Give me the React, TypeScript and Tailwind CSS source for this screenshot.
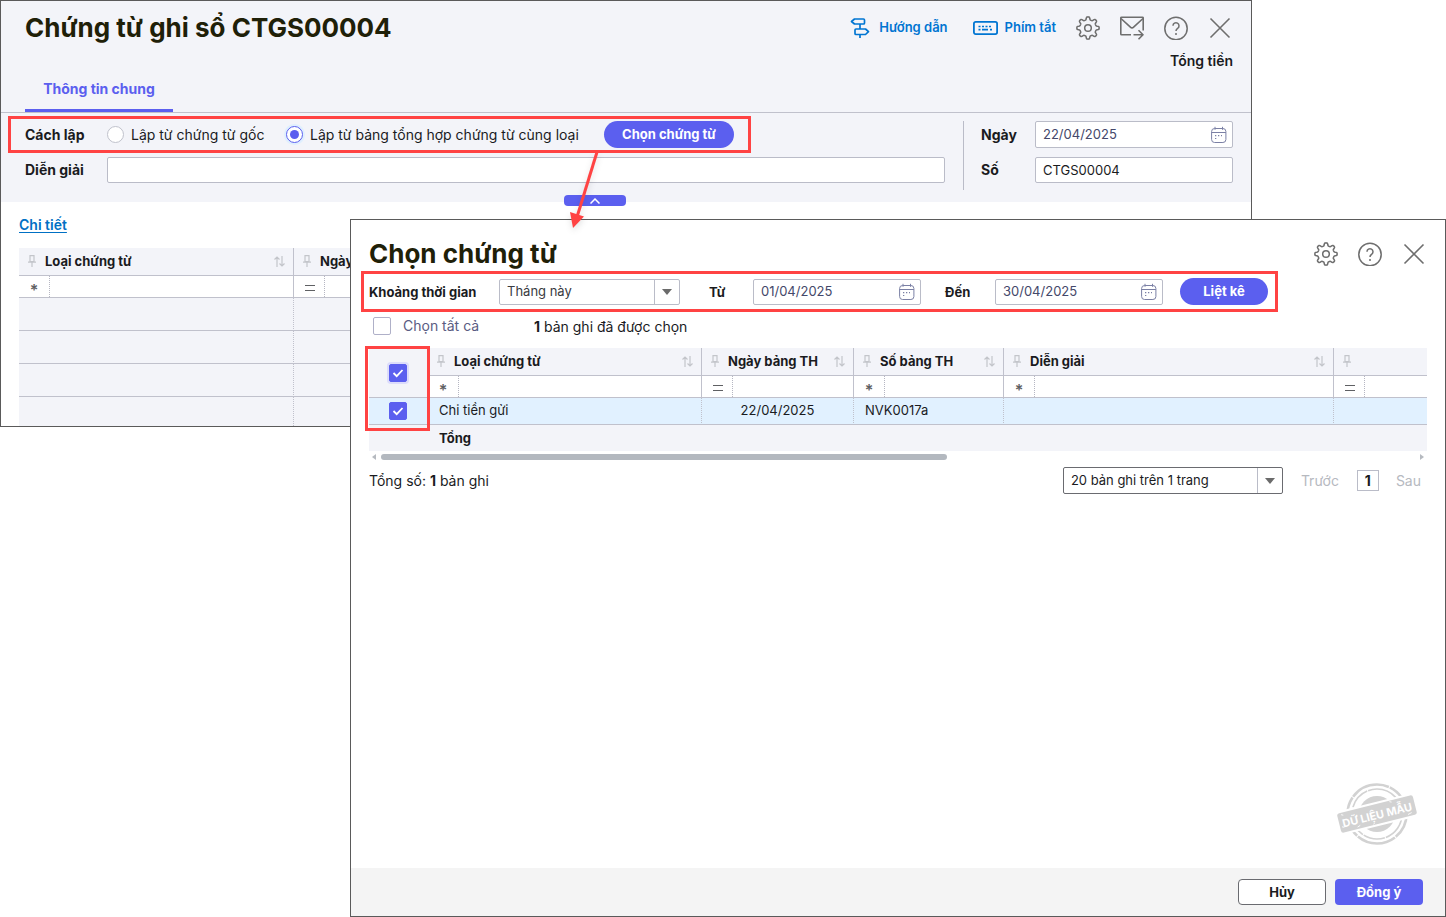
import type { InputHTMLAttributes, ReactNode } from 'react'

type FilterKind = 'text' | 'equal'

interface Column {
  title: string
  width: string
  filter: FilterKind
}

const voucherColumns: Column[] = [
  { title: 'Loại chứng từ', width: 'w-[275px]', filter: 'text' },
  { title: 'Ngày', width: '', filter: 'equal' },
]

const pickerColumns: Column[] = [
  { title: 'Loại chứng từ', width: 'w-[274px]', filter: 'text' },
  { title: 'Ngày bảng TH', width: 'w-[152px]', filter: 'equal' },
  { title: 'Số bảng TH', width: 'w-[150px]', filter: 'text' },
  { title: 'Diễn giải', width: 'w-[330px]', filter: 'text' },
  { title: '', width: '', filter: 'equal' },
]

// outline of an eight-tooth cog, sampled around the circle
const gearPoints = Array.from({ length: 160 }, (_, i) => {
  const angle = (i / 160) * Math.PI * 2
  const radius = 9.7 + 1.5 * Math.tanh(2.2 * Math.cos(8 * angle) - 0.2)
  return `${(12 + radius * Math.cos(angle)).toFixed(2)},${(12 + radius * Math.sin(angle)).toFixed(2)}`
}).join(' ')

function GearIcon() {
  return (
    <svg width="24" height="24" viewBox="0 0 24 24" fill="none" stroke="currentColor" strokeWidth="1.500" strokeLinejoin="round">
      <polygon points={gearPoints} />
      <circle cx="12" cy="12" r="3.300" />
    </svg>
  )
}

function SignpostIcon() {
  return (
    <svg width="20" height="22" viewBox="0 0 20 22" fill="none" stroke="currentColor" strokeWidth="1.700" strokeLinejoin="round">
      <path d="M4.500 2h9a1 1 0 0 1 1 1v3a1 1 0 0 1-1 1h-9L1.500 4.500z" />
      <path d="M6 12h9.500l3 2.700-3 2.800H6a1 1 0 0 1-1-1V13a1 1 0 0 1 1-1z" />
      <path d="M10 7v5M10 17.500v3.500" />
    </svg>
  )
}

function KeyboardIcon() {
  return (
    <svg width="25" height="14" viewBox="0 0 25 14" fill="none" stroke="currentColor">
      <rect x="0.900" y="0.900" width="23.200" height="12.200" rx="1.800" strokeWidth="1.800" />
      <path d="M5.500 5.500h14" strokeWidth="1.700" strokeDasharray="2 1.500" />
      <path d="M5.500 8.700h2M9 8.700h6M17 8.700h2" strokeWidth="1.700" />
    </svg>
  )
}

function MailIcon() {
  return (
    <svg width="24" height="24" viewBox="0 0 24 24" fill="none" stroke="currentColor" strokeWidth="1.600" strokeLinejoin="round">
      <path d="M11 18.700H1.600a.8.8 0 0 1-.8-.8V2a.8.8 0 0 1 .8-.8h20.800a.8.8 0 0 1 .8.8v12.500" />
      <path d="M1 2.500l9.400 8.600a2.300 2.300 0 0 0 3.200 0L23 2.500M13.500 18.700h9.500M18.500 14.200l4.500 4.500-4.500 4.500" />
    </svg>
  )
}

function HelpIcon() {
  return (
    <svg width="24" height="24" viewBox="0 0 24 24" fill="none" stroke="currentColor" strokeWidth="1.500">
      <circle cx="12" cy="12.500" r="11.200" />
      <path d="M9 9.800a3 3 0 1 1 4.600 2.500c-1 .7-1.600 1.200-1.600 2.600" />
      <circle cx="12" cy="18" r="1" fill="currentColor" stroke="none" />
    </svg>
  )
}

function CloseIcon() {
  return (
    <svg width="24" height="24" viewBox="0 0 24 24" fill="none" stroke="currentColor" strokeWidth="1.600">
      <path d="M2.500 2.500l19 19M21.500 2.500l-19 19" />
    </svg>
  )
}

function CalendarIcon() {
  return (
    <svg width="16" height="18" viewBox="0 0 16 18" fill="none" stroke="currentColor">
      <rect x="0.600" y="2.500" width="14.300" height="14" rx="3" />
      <path d="M.6 6.500h14.300M4 .8v3M11.500 .8v3" />
      <path d="M4 9.700h1.300M7 9.700h1.300M10 9.700h1M4 12.500h1.300" strokeWidth="1.200" />
    </svg>
  )
}

function PinIcon() {
  return (
    <svg width="8" height="12" viewBox="0 0 8 12" fill="none" stroke="currentColor" strokeWidth="1.200" className="shrink-0 text-[#c3c5ca]">
      <path d="M2 .6h4v6H2zM0 7.200h8M4 7.200V12" />
    </svg>
  )
}

function SortIcon() {
  return (
    <svg width="11" height="11" viewBox="0 0 11 11" fill="none" stroke="currentColor" strokeWidth="1.200" className="shrink-0 text-[#c3c5ca]">
      <path d="M3 11V1M.5 3.500L3 1l2.500 2.500M8 0v10M5.500 7.500L8 10l2.500-2.500" />
    </svg>
  )
}

function SampleStamp() {
  return (
    <svg width="80" height="64" viewBox="0 0 80 64" role="img" aria-label="Dữ liệu mẫu">
      <g fill="none" stroke="#d2d2d2">
        <circle cx="40" cy="32" r="29.500" strokeWidth="2.600" strokeDasharray="26 1 40 1 15 1" />
        <circle cx="40" cy="32" r="25" strokeWidth="1.600" strokeDasharray="30 1 22 1" />
      </g>
      <circle cx="40" cy="32" r="18" fill="#d2d2d2" />
      <g transform="rotate(-14 40 32)">
        <rect x="-1" y="20" width="82" height="24" fill="#fff" />
        <rect x="1" y="22" width="78" height="20" rx="2.500" fill="#d2d2d2" />
        <path d="M5 24l2 1M18 40l3-1M55 23l2 1M70 40l4-1M34 41l2-1M3 36l2 1" stroke="#fff" strokeWidth="0.800" />
        <text x="40" y="37" textAnchor="middle" fill="#fff" fontSize="11" fontWeight="700">
          DỮ LIỆU MẪU
        </text>
      </g>
    </svg>
  )
}

function IconButton({ label, children }: { label: string; children: ReactNode }) {
  return (
    <button type="button" aria-label={label} className="flex size-6 items-center justify-center text-[#6e6e6e]">
      {children}
    </button>
  )
}

function DateInput({ id, value, className }: { id: string; value: string; className: string }) {
  return (
    <div className={`relative ${className}`}>
      <input
        id={id}
        defaultValue={value}
        className="h-full w-full rounded-xs border border-[#babcc8] bg-white px-[7px] pb-0.5 text-[13px] text-[#44486a]"
      />
      <span className="pointer-events-none absolute inset-y-0 right-1.5 flex items-center text-[#7b80a5]">
        <CalendarIcon />
      </span>
    </div>
  )
}

function Select({ id, label, value, className }: { id: string; label?: string; value: string; className: string }) {
  return (
    <div className={`relative ${className}`}>
      <select
        id={id}
        aria-label={label}
        defaultValue={value}
        className="h-full w-full appearance-none rounded-xs border border-inherit bg-white px-[7px] text-[13px]"
      >
        <option>{value}</option>
      </select>
      <span className="pointer-events-none absolute inset-y-px right-px flex w-[25px] items-center justify-center border-l border-[#babcc8]">
        <span className="border-x-[5px] border-t-[6px] border-x-transparent border-t-[#6b6b6b]" />
      </span>
    </div>
  )
}

function Checkbox({ className = '', ...props }: InputHTMLAttributes<HTMLInputElement>) {
  return (
    <span className={`relative inline-flex size-[18px] rounded-xs ${className}`}>
      <input
        type="checkbox"
        className="peer size-full appearance-none rounded-xs border border-[#afb0c8] bg-white checked:border-[#5b5fef] checked:bg-[#5b5fef]"
        {...props}
      />
      <svg
        viewBox="0 0 18 18"
        fill="none"
        stroke="#fff"
        strokeWidth="1.800"
        className="pointer-events-none absolute inset-0 hidden peer-checked:block"
      >
        <path d="M4.500 9l3.200 3.200L13.500 6" />
      </svg>
    </span>
  )
}

function Radio(props: InputHTMLAttributes<HTMLInputElement>) {
  return (
    <input
      type="radio"
      name="method"
      className="grid size-[17px] shrink-0 appearance-none place-content-center rounded-full border border-[#c0c2cc] bg-white before:size-[9px] before:rounded-full checked:border-[#5b5fef] checked:ring-2 checked:ring-[#dfeffe] checked:before:bg-[#5b5fef]"
      {...props}
    />
  )
}

function HeaderCell({ column, last }: { column: Column; last: boolean }) {
  return (
    <th scope="col" className={`h-7 border-b border-[#c0c1cc] p-0 align-top ${column.width} ${last ? '' : 'border-r'}`}>
      <div className="flex h-[26px] items-center pr-2 pl-[9px] text-[13px] leading-5 font-bold">
        <PinIcon />
        <span className="ml-[9px] flex-1 truncate text-left">{column.title}</span>
        {column.title && <SortIcon />}
      </div>
    </th>
  )
}

function FilterCell({ column, last }: { column: Column; last: boolean }) {
  return (
    <td className={`h-[22px] border-b border-[#c0c1cc] bg-white p-0 ${last ? '' : 'border-r'}`}>
      <div className="flex h-[21px]">
        <button
          type="button"
          aria-label={`Điều kiện lọc ${column.title}`}
          className="flex w-[31px] shrink-0 items-center justify-center border-r border-dotted border-[#b5b6c2] text-[#5f6063]"
        >
          {column.filter === 'equal' ? (
            <svg width="10" height="6" viewBox="0 0 10 6" stroke="currentColor" className="mt-0.5 ml-0.5">
              <path d="M0 .5h10M0 5.500h10" />
            </svg>
          ) : (
            <span className="pt-1.5 text-base leading-4 font-semibold">*</span>
          )}
        </button>
        <input aria-label={`Lọc ${column.title}`} className="min-w-0 flex-1 px-2 text-[13px]" />
      </div>
    </td>
  )
}

function VoucherTable() {
  return (
    <table className="w-full table-fixed border-separate border-spacing-0 bg-[#f3f4f9]">
      <thead>
        <tr>
          {voucherColumns.map((column, i) => (
            <HeaderCell key={column.title} column={column} last={i === voucherColumns.length - 1} />
          ))}
        </tr>
        <tr>
          {voucherColumns.map((column, i) => (
            <FilterCell key={column.title} column={column} last={i === voucherColumns.length - 1} />
          ))}
        </tr>
      </thead>
      <tbody>
        {[0, 1, 2].map((row) => (
          <tr key={row}>
            {voucherColumns.map((column) => (
              <td key={column.title} className="h-[33px] border-r border-b border-[#c0c1cc] [border-right-style:dotted]" />
            ))}
          </tr>
        ))}
        <tr>
          {voucherColumns.map((column) => (
            <td key={column.title} className="h-[29px] border-r border-dotted border-[#c0c1cc]" />
          ))}
        </tr>
      </tbody>
    </table>
  )
}

function PickerTable() {
  const cell = 'h-[27px] border-b border-[#c0c1cc] bg-[#e1f1ff] pt-0 pb-0.5 leading-5 [border-right-style:dotted]'

  return (
    <div className="relative">
      <table className="w-full table-fixed border-separate border-spacing-0 bg-[#f3f4f9] text-[13px]">
        <thead>
          <tr>
            <th rowSpan={2} scope="col" className="w-[59px] border-r border-b border-[#c0c1cc] p-0">
              <div className="flex justify-center">
                <Checkbox aria-label="Chọn tất cả chứng từ" defaultChecked className="ring-2 ring-[#dcdcfb]" />
              </div>
            </th>
            {pickerColumns.map((column, i) => (
              <HeaderCell key={i} column={column} last={i === pickerColumns.length - 1} />
            ))}
          </tr>
          <tr>
            {pickerColumns.map((column, i) => (
              <FilterCell key={i} column={column} last={i === pickerColumns.length - 1} />
            ))}
          </tr>
        </thead>
        <tbody>
          <tr>
            <td className="border-r border-b border-[#c0c1cc] bg-[#e1f1ff] p-0 [border-right-style:dotted]">
              <div className="flex justify-center">
                <Checkbox aria-label="Chọn Chi tiền gửi" defaultChecked />
              </div>
            </td>
            <td className={`${cell} border-r px-[11px]`}>Chi tiền gửi</td>
            <td className={`${cell} border-r px-[11px] text-center`}>22/04/2025</td>
            <td className={`${cell} border-r px-[11px]`}>NVK0017a</td>
            <td className={`${cell} border-r`} />
            <td className={cell} />
          </tr>
        </tbody>
        <tfoot>
          <tr>
            <td className="h-[26px] p-0" />
            <td className="px-[11px] py-0 font-bold">Tổng</td>
            <td colSpan={4} />
          </tr>
        </tfoot>
      </table>
      <div className="pointer-events-none absolute -top-0.5 -left-1 h-[85px] w-[65px] border-3 border-[#ff4343]" />
    </div>
  )
}

function VoucherWindow() {
  return (
    <section className="mr-[194px] border border-[#5a5a5a] bg-white">
      <header className="border-b border-[#c0c1cc] bg-[#f3f4f9] pr-[18px] pl-6">
        <div className="flex h-[50px] items-center justify-between pt-1 pr-px">
          <h1 className="text-[26px] leading-8 font-bold text-[#1f2008]">Chứng từ ghi sổ CTGS00004</h1>
          <div className="flex items-center gap-5">
            <a href="#huong-dan" className="flex items-center gap-[9px] text-[13px] font-semibold text-[#0075d2]">
              <SignpostIcon />
              Hướng dẫn
            </a>
            <a href="#phim-tat" className="ml-[5px] flex items-center gap-[7px] text-[13px] font-semibold text-[#0075d2]">
              <KeyboardIcon />
              Phím tắt
            </a>
            <IconButton label="Thiết lập">
              <GearIcon />
            </IconButton>
            <IconButton label="Gửi email">
              <MailIcon />
            </IconButton>
            <IconButton label="Trợ giúp">
              <HelpIcon />
            </IconButton>
            <IconButton label="Đóng">
              <CloseIcon />
            </IconButton>
          </div>
        </div>
        <div className="flex h-[61px] justify-between">
          <button
            type="button"
            className="h-[43px] w-[148px] self-end border-b-3 border-[#5b5fef] text-sm font-bold text-[#5b5fef]"
          >
            Thông tin chung
          </button>
          <p className="text-sm leading-5 font-semibold">Tổng tiền</p>
        </div>
      </header>

      <form className="relative flex bg-[#f3f4f9] pt-[3px] pr-[18px] pb-[19px] pl-[7px] text-sm">
        <div className="flex-1">
          <div
            role="radiogroup"
            aria-labelledby="method-label"
            className="flex h-[37px] w-fit items-center border-3 border-[#ff4343] px-3.5"
          >
            <span id="method-label" className="w-[82px] font-bold">
              Cách lập
            </span>
            <label className="flex w-[179px] items-center gap-[7px]">
              <Radio />
              Lập từ chứng từ gốc
            </label>
            <label className="flex w-[318px] items-center gap-[7px]">
              <Radio defaultChecked />
              Lập từ bảng tổng hợp chứng từ cùng loại
            </label>
            <button type="button" className="h-[27px] w-[130px] rounded-full bg-[#5b5fef] text-[13px] font-bold text-white">
              Chọn chứng từ
            </button>
          </div>
          <div className="mt-1 flex items-center pr-[18px] pl-[17px]">
            <label htmlFor="description" className="w-[82px] font-bold">
              Diễn giải
            </label>
            <input id="description" className="h-[26px] min-w-0 flex-1 rounded-xs border border-[#babcc8] bg-white px-[7px] text-[13px]" />
          </div>
        </div>
        <div className="mt-[5px] -mb-[7px] grid grid-cols-[54px_198px] content-start gap-y-[9px] border-l border-[#babcc8] pl-[17px]">
          <label htmlFor="voucher-date" className="self-center font-bold">
            Ngày
          </label>
          <DateInput id="voucher-date" value="22/04/2025" className="h-[27px]" />
          <label htmlFor="voucher-no" className="self-center font-bold">
            Số
          </label>
          <input
            id="voucher-no"
            defaultValue="CTGS00004"
            className="h-[26px] rounded-xs border border-[#babcc8] bg-white px-[7px] text-[13px]"
          />
        </div>
        <button
          type="button"
          aria-label="Thu gọn"
          className="absolute -bottom-1 left-[563px] flex h-[11px] w-[62px] items-center justify-center rounded-sm bg-[#5b5fef] text-white"
        >
          <svg width="10" height="6" viewBox="0 0 10 6" fill="none" stroke="currentColor" strokeWidth="1.500">
            <path d="M.5 5.500L5 1l4.500 4.500" />
          </svg>
        </button>
      </form>

      <div className="px-[18px] pt-[13px]">
        <a href="#chi-tiet" className="mb-[13px] block w-fit text-sm leading-5 font-semibold text-[#0070c4] underline underline-offset-2">
          Chi tiết
        </a>
        <VoucherTable />
      </div>
    </section>
  )
}

function PickerDialog() {
  return (
    <section
      role="dialog"
      aria-labelledby="picker-title"
      className="absolute top-[219px] right-0 bottom-0 left-[350px] flex flex-col border border-[#5a5a5a] bg-white text-sm"
    >
      <div className="flex-1 px-[18px]">
        <div className="flex h-[51px] items-center justify-between pt-[17px] pr-px">
          <h2 id="picker-title" className="text-[26px] leading-8 font-bold text-[#1f2008]">
            Chọn chứng từ
          </h2>
          <div className="flex items-center gap-5">
            <IconButton label="Thiết lập">
              <GearIcon />
            </IconButton>
            <IconButton label="Trợ giúp">
              <HelpIcon />
            </IconButton>
            <IconButton label="Đóng">
              <CloseIcon />
            </IconButton>
          </div>
        </div>

        <div className="-ml-2 flex h-[41px] w-fit items-center border-3 border-[#ff4343] pr-[7px] pl-[5px] text-[13px] font-bold">
          <label htmlFor="period" className="w-[130px] pt-0.5">
            Khoảng thời gian
          </label>
          <Select id="period" value="Tháng này" className="h-[26px] w-[181px] border-[#babcc8] font-normal text-[#3a3b3f]" />
          <label htmlFor="from-date" className="ml-[29px] w-11 pt-0.5">
            Từ
          </label>
          <DateInput id="from-date" value="01/04/2025" className="h-[26px] w-[168px] font-normal" />
          <label htmlFor="to-date" className="ml-6 w-[50px] pt-0.5">
            Đến
          </label>
          <DateInput id="to-date" value="30/04/2025" className="h-[26px] w-[168px] font-normal" />
          <button type="button" className="ml-[17px] h-[27px] w-[88px] rounded-full bg-[#5b5fef] text-white">
            Liệt kê
          </button>
        </div>

        <div className="mb-2 flex h-7 items-center pl-1">
          <label className="flex w-[161px] items-center gap-3 text-[#5a5c82]">
            <Checkbox />
            Chọn tất cả
          </label>
          <p className="pt-0.5">
            <b>1</b> bản ghi đã được chọn
          </p>
        </div>

        <PickerTable />

        <div className="flex h-3 items-center justify-between px-[3px]">
          <span className="border-y-[3px] border-r-[4px] border-y-transparent border-r-[#b6bac0]" />
          <div className="mr-auto ml-[5px] h-1.5 w-[566px] rounded-full bg-[#b3b8bf]" />
          <span className="border-y-[3px] border-l-[4px] border-y-transparent border-l-[#b6bac0]" />
        </div>

        <div className="mt-1 flex items-center pr-1.5">
          <p className="flex-1">
            Tổng số: <b>1</b> bản ghi
          </p>
          <Select id="page-size" label="Số bản ghi trên trang" value="20 bản ghi trên 1 trang" className="h-[27px] w-[220px] border-[#6a6b70]" />
          <button type="button" className="ml-[18px] w-14 text-left text-[#b6b9bf]">
            Trước
          </button>
          <button type="button" className="h-[21px] w-[22px] border border-[#babcc8] leading-4 font-bold">
            1
          </button>
          <button type="button" className="ml-[17px] text-[#b6b9bf]">
            Sau
          </button>
        </div>
      </div>

      <div className="flex justify-end pr-7 pb-[22px]">
        <SampleStamp />
      </div>

      <footer className="flex h-12 items-center justify-end gap-[9px] bg-[#f4f4f4] pr-[22px] text-[13px] font-bold">
        <button type="button" className="h-[26px] w-[88px] rounded-sm border border-[#6a6b70] bg-white">
          Hủy
        </button>
        <button type="button" className="h-[26px] w-[88px] rounded-sm bg-[#5b5fef] text-white">
          Đồng ý
        </button>
      </footer>
    </section>
  )
}

export default function App() {
  return (
    <main className="relative min-h-screen bg-white font-['Inter','Noto_Sans',sans-serif] text-[#1a1b1e]">
      <VoucherWindow />
      <PickerDialog />
      {/* arrow from the button to the dialog it opens */}
      <svg
        width="44"
        height="84"
        viewBox="0 0 44 84"
        aria-hidden="true"
        className="pointer-events-none absolute top-[150px] left-[562px] drop-shadow-md"
      >
        <path d="M35 2L15 67" stroke="#ff4343" strokeWidth="3" />
        <path d="M8 62l14 4.500L11 78z" fill="#ff4343" />
      </svg>
    </main>
  )
}
